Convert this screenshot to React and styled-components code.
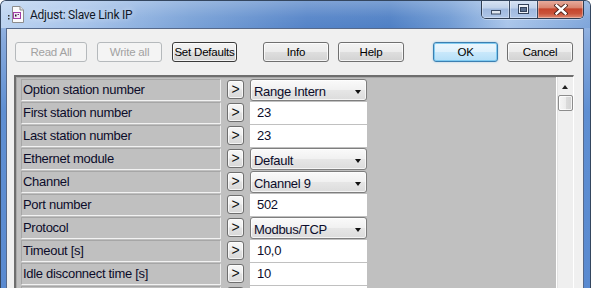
import React from "react";
import styled, { createGlobalStyle } from "styled-components";

const Global = createGlobalStyle`
  html, body { margin: 0; padding: 0; background: #ffffff; }
  body { width: 591px; height: 288px; overflow: hidden; }
  * { box-sizing: border-box; }
`;

const Window = styled.div`
  width: 591px;
  height: 288px;
  overflow: hidden;
  display: flex;
  flex-direction: column;
  border: 1px solid #34465f;
  border-bottom: none;
  border-radius: 6px 6px 0 0;
  background: linear-gradient(180deg, #a9c4e9 0px, #86a9dc 40px, #5f8fd2 110px, #5a8ad0 100%);
`;

const TitleBar = styled.div`
  height: 27px;
  flex: 0 0 27px;
  display: flex;
  align-items: flex-start;
  padding: 0 6px 0 7px;
  background:
    linear-gradient(180deg, rgba(255,255,255,0.25) 0%, rgba(255,255,255,0.05) 60%, rgba(255,255,255,0) 100%),
    linear-gradient(90deg, #bcd3f0 0%, #a6c3ea 14%, #7aa2d7 32%, #5584c8 52%, #4f80c5 66%, #6f9ad3 76%, #a9c5ea 86%, #7ea5da 100%);
`;

const TitleIcon = styled.svg`
  width: 16px;
  height: 18px;
  margin-top: 4px;
  flex: 0 0 auto;
`;

const TitleText = styled.div`
  margin: 6px 0 0 6px;
  font-family: Roboto, "Noto Sans", sans-serif;
  font-size: 12px;
  letter-spacing: -0.25px;
  color: #101828;
  line-height: 16px;
  text-shadow: 0 0 6px rgba(255,255,255,0.8);
`;

const Controls = styled.div`
  margin-left: auto;
  margin-top: -1px;
  height: 19px;
  display: flex;
  border: 1px solid #2f3d52;
  border-top: none;
  border-radius: 0 0 5px 5px;
  overflow: hidden;
  box-shadow: 0 1px 0 rgba(255,255,255,0.4);
`;

const CtrlButton = styled.div`
  width: ${(p) => p.$w}px;
  height: 100%;
  display: flex;
  align-items: center;
  justify-content: center;
  border-left: ${(p) => (p.$first ? "none" : "1px solid #3a4a62")};
  background: ${(p) =>
    p.$close
      ? "linear-gradient(180deg, #e9b0a2 0%, #da8670 42%, #c6452c 50%, #c9533a 75%, #de8a72 100%)"
      : "linear-gradient(180deg, #dae5f4 0%, #bfd1ea 45%, #9fb8de 50%, #afc6e7 100%)"};
  box-shadow: inset 0 0 0 1px rgba(255,255,255,0.35);
`;

const Client = styled.div`
  flex: 1;
  margin: 0 6px 0 5px;
  border: 1px solid #56698a;
  border-bottom: none;
  background: #f0f0f0;
  display: flex;
  flex-direction: column;
  min-height: 0;
`;

const Toolbar = styled.div`
  display: flex;
  align-items: center;
  padding: 13px 0 0 8px;
  height: 33px;
`;

const Button = styled.div`
  width: ${(p) => p.$w}px;
  height: 20px;
  margin-left: ${(p) => p.$ml || 0}px;
  display: flex;
  align-items: center;
  justify-content: center;
  white-space: nowrap;
  font-family: "Liberation Sans", Arial, sans-serif;
  font-size: 11.5px;
  letter-spacing: -0.2px;
  border-radius: 3px;
  color: ${(p) => (p.$disabled ? "#a2a2a2" : "#000000")};
  border: 1px solid
    ${(p) => (p.$disabled ? "#b5b9bc" : p.$default ? "#3c7fb1" : p.$dark ? "#3a3a3a" : "#707070")};
  background: ${(p) =>
    p.$disabled
      ? "#f4f4f4"
      : p.$default
      ? "linear-gradient(180deg, #edf7fd 0%, #dff1fc 48%, #c9e8fb 52%, #b5dff7 100%)"
      : "linear-gradient(180deg, #f3f3f3 0%, #ececec 48%, #dedede 52%, #d2d2d2 100%)"};
  box-shadow: ${(p) =>
    p.$disabled
      ? "none"
      : p.$default
      ? "inset 0 0 0 1px rgba(120,200,240,0.9), 0 0 2px rgba(60,160,220,0.5)"
      : "inset 0 0 0 1px rgba(255,255,255,0.75)"};
`;

const Panel = styled.div`
  flex: 1;
  margin: 13px 9px 0 7px;
  display: flex;
  border-style: solid;
  border-width: 2px 1px 0 2px;
  border-color: #6e6e6e #ffffff #ffffff #6e6e6e;
  min-height: 0;
`;

const Grid = styled.div`
  flex: 1;
  background: #c0c0c0;
  padding: 1px 0 0 4px;
  display: flex;
  flex-direction: column;
  gap: 1px;
  border-top: 1px solid #a8a8a8;
  border-left: 1px solid #a8a8a8;
`;

const Row = styled.div`
  display: grid;
  grid-template-columns: 200px 17px 117px;
  column-gap: 6px;
  height: 22px;
  flex: 0 0 22px;
`;

const cellFont = `
  font-family: "Liberation Sans", Arial, sans-serif;
  font-size: 13px;
  letter-spacing: -0.3px;
  color: #0c0c2a;
  white-space: nowrap;
`;

const Label = styled.div`
  height: 22px;
  background: #c0c0c0;
  border-style: solid;
  border-width: 1px;
  border-color: #a6a6a6 #ececec #f2f2f2 #a6a6a6;
  padding-left: 1px;
  line-height: 19px;
  overflow: hidden;
  ${cellFont}
`;

const GoButton = styled.div`
  width: 17px;
  height: 19px;
  margin-top: 1px;
  border: 1px solid #6f6f6f;
  border-radius: 3px;
  background: linear-gradient(180deg, #f7f7f7 0%, #efefef 48%, #e2e2e2 52%, #d8d8d8 100%);
  box-shadow: inset 0 0 0 1px rgba(255,255,255,0.7);
  display: flex;
  align-items: center;
  justify-content: center;
  font-family: "Liberation Sans", Arial, sans-serif;
  font-size: 14px;
  line-height: 14px;
  padding-bottom: 1px;
  color: #111111;
`;

const Combo = styled.div`
  height: 22px;
  border: 1px solid #7e7e7e;
  border-radius: 3px;
  background: linear-gradient(180deg, #fafafa 0%, #f1f1f1 48%, #e6e6e6 52%, #dcdcdc 100%);
  box-shadow: inset 0 0 0 1px rgba(255,255,255,0.7);
  display: flex;
  align-items: center;
  padding: 3px 5px 0 3px;
  ${cellFont}
`;

const ComboArrow = styled.span`
  margin-left: auto;
  margin-top: 1px;
  width: 0;
  height: 0;
  border-left: 3.5px solid transparent;
  border-right: 3.5px solid transparent;
  border-top: 4px solid #111111;
`;

const Input = styled.div`
  height: 22px;
  background: #ffffff;
  padding: 2px 0 0 7px;
  line-height: 18px;
  ${cellFont}
`;

const ScrollBar = styled.div`
  width: 17px;
  flex: 0 0 17px;
  background: linear-gradient(90deg, #ffffff 0px, #ffffff 1px, #e2e2e2 1px, #e2e2e2 2px, #efefef 2px);
  display: flex;
  flex-direction: column;
  align-items: center;
  padding-left: 1px;
`;

const UpArrow = styled.div`
  height: 18px;
  width: 100%;
  display: flex;
  align-items: center;
  justify-content: center;
  &::after {
    content: "";
    width: 0;
    height: 0;
    margin-top: 1px;
    border-left: 3.5px solid transparent;
    border-right: 3.5px solid transparent;
    border-bottom: 4px solid #222222;
  }
`;

const Thumb = styled.div`
  width: 15px;
  height: 16px;
  border: 1px solid #8c8c8c;
  border-radius: 2px;
  background: linear-gradient(90deg, #f6f6f6 0%, #ececec 50%, #dcdcdc 51%, #d2d2d2 100%);
  box-shadow: inset 0 0 0 1px rgba(255,255,255,0.75);
`;

const rows = [
  { label: "Option station number", type: "combo", value: "Range Intern" },
  { label: "First station number", type: "input", value: "23" },
  { label: "Last station number", type: "input", value: "23" },
  { label: "Ethernet module", type: "combo", value: "Default" },
  { label: "Channel", type: "combo", value: "Channel 9" },
  { label: "Port number", type: "input", value: "502" },
  { label: "Protocol", type: "combo", value: "Modbus/TCP" },
  { label: "Timeout [s]", type: "input", value: "10,0" },
  { label: "Idle disconnect time [s]", type: "input", value: "10" },
  { label: "", type: "input", value: "", blank: true },
];

const buttons = [
  { text: "Read All", w: 72, ml: 0, disabled: true },
  { text: "Write all", w: 65, ml: 10, disabled: true },
  { text: "Set Defaults", w: 65, ml: 10, dark: true },
  { text: "Info", w: 66, ml: 26 },
  { text: "Help", w: 66, ml: 9 },
  { text: "OK", w: 65, ml: 29, def: true },
  { text: "Cancel", w: 66, ml: 9 },
];

function AppIcon() {
  return (
    <TitleIcon viewBox="0 0 16 18">
      <rect x="0" y="10" width="1.5" height="1.5" fill="#333" />
      <rect x="0" y="13" width="1.5" height="1.5" fill="#333" />
      <path d="M4.5 1.5 H12 L15.5 5 V17.5 H4.5 Z" fill="#fbfbfb" stroke="#8d8d8d" strokeWidth="1" />
      <path d="M12 1.5 V5 H15.5" fill="#e4e4e4" stroke="#8d8d8d" strokeWidth="1" />
      <rect x="5.5" y="7.5" width="7" height="6" fill="#f4e8f6" stroke="#a13ca8" strokeWidth="1" />
      <rect x="7" y="9.5" width="1.5" height="2" fill="#222" />
      <rect x="9.5" y="9" width="1.5" height="1" fill="#6b2a70" />
    </TitleIcon>
  );
}

function MinIcon() {
  return (
    <svg width="10" height="6" viewBox="0 0 10 6" style={{ marginTop: 6 }}>
      <rect x="0.5" y="1.5" width="9" height="3.5" fill="#dfe6ef" stroke="#3b4a62" strokeWidth="1" />
    </svg>
  );
}

function MaxIcon() {
  return (
    <svg width="11" height="10" viewBox="0 0 11 10">
      <rect x="0.5" y="0.5" width="10" height="9" fill="#eef2f8" stroke="#33425a" strokeWidth="1" />
      <rect x="2.5" y="3.5" width="6" height="4" fill="#5b6f8f" stroke="#33425a" strokeWidth="1" />
    </svg>
  );
}

function CloseIcon() {
  return (
    <svg width="14" height="11" viewBox="0 0 14 11">
      <path d="M2.5 1.5 L11.5 9.5 M11.5 1.5 L2.5 9.5" stroke="#4a2018" strokeWidth="4.2" strokeLinecap="square" />
      <path d="M2.5 1.5 L11.5 9.5 M11.5 1.5 L2.5 9.5" stroke="#ffffff" strokeWidth="2.4" strokeLinecap="square" />
    </svg>
  );
}

export default function App() {
  return (
    <>
      <Global />
      <Window>
        <TitleBar>
          <AppIcon />
          <TitleText>Adjust: Slave Link IP</TitleText>
          <Controls>
            <CtrlButton $w={27} $first>
              <MinIcon />
            </CtrlButton>
            <CtrlButton $w={28}>
              <MaxIcon />
            </CtrlButton>
            <CtrlButton $w={46} $close>
              <CloseIcon />
            </CtrlButton>
          </Controls>
        </TitleBar>
        <Client>
          <Toolbar>
            {buttons.map((b) => (
              <Button
                key={b.text}
                $w={b.w}
                $ml={b.ml}
                $disabled={b.disabled}
                $dark={b.dark}
                $default={b.def}
              >
                {b.text}
              </Button>
            ))}
          </Toolbar>
          <Panel>
            <Grid>
              {rows.map((r, i) => (
                <Row key={i}>
                  <Label>{r.label}</Label>
                  <GoButton>{r.blank ? "" : ">"}</GoButton>
                  {r.type === "combo" ? (
                    <Combo>
                      {r.value}
                      <ComboArrow />
                    </Combo>
                  ) : (
                    <Input>{r.value}</Input>
                  )}
                </Row>
              ))}
            </Grid>
            <ScrollBar>
              <UpArrow />
              <Thumb />
            </ScrollBar>
          </Panel>
        </Client>
      </Window>
    </>
  );
}
